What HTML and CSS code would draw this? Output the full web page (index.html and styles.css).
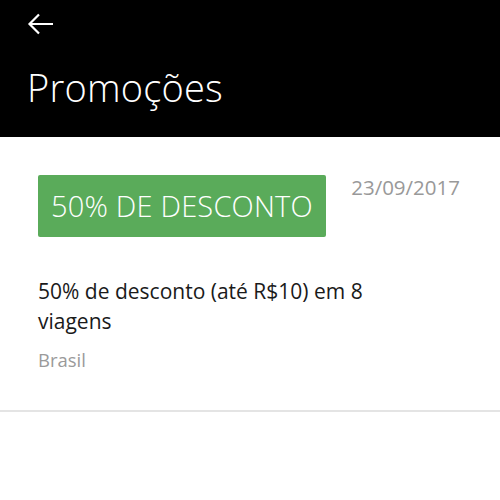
FILE: index.html
```html
<!DOCTYPE html>
<html>
<head>
  <title>Promoções</title>
  <link rel="stylesheet" href="styles.css">
</head>
<body>
  <header class="topbar">
    <div class="back">
      <svg width="28" height="24" viewBox="0 0 28 24">
        <path d="M26 12H3M12 2.5L2.5 12L12 21.5" fill="none" stroke="#fff" stroke-width="2.2"/>
      </svg>
    </div>
    <h1 class="title">Promoções</h1>
  </header>

  <div class="promo">
    <div class="promo-head">
      <div class="badge">50% DE DESCONTO</div>
      <div class="date">23/09/2017</div>
    </div>
    <div class="promo-text">50% de desconto (até R$10) em 8 viagens</div>
    <div class="promo-region">Brasil</div>
  </div>
</body>
</html>
```

FILE: styles.css
```css
body {
  margin: 0;
  font-family: "Open Sans", sans-serif;
  background: #fff;
}
.topbar {
  background: #000;
  color: #fff;
  height: 137px;
  padding: 12px 27px 0;
  box-sizing: border-box;
}
.back {
  height: 24px;
}
.back svg {
  display: block;
}
.title {
  margin: 26px 0 0;
  font-weight: 300;
  font-size: 38px;
  line-height: 50px;
  letter-spacing: 0.2px;
}
.promo {
  padding: 38px 38px 38px;
  border-bottom: 2px solid #e4e4e4;
}
.promo-head {
  display: flex;
  justify-content: space-between;
  align-items: flex-start;
}
.badge {
  background: #5aab5a;
  color: #fff;
  font-weight: 300;
  font-size: 29px;
  line-height: 62px;
  padding: 0 13px 0 13px;
  border-radius: 2px;
  letter-spacing: 0.2px;
}
.date {
  color: #999;
  font-size: 20.5px;
  line-height: 24px;
  margin-right: 2px;
}
.promo-text {
  margin-top: 39px;
  font-size: 21px;
  line-height: 30px;
  color: #1a1a1a;
  max-width: 390px;
}
.promo-text + .promo-region {
  margin-top: 12px;
}
.promo-region {
  color: #9a9a9a;
  font-size: 18.5px;
  line-height: 24px;
}
```
